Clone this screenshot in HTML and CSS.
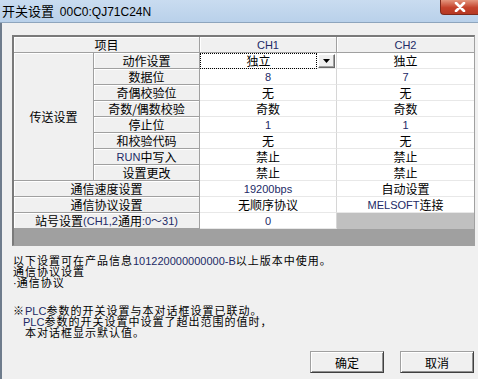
FILE: index.html
```html
<!DOCTYPE html>
<html lang="zh-CN">
<head>
    <meta charset="UTF-8">
    <title>开关设置</title>
    <link rel="stylesheet" href="styles.css">
</head>
<body>
    <div class="window">
        <div class="titlebar">
            <span class="title">开关设置&nbsp; <span class="lat">00C0:QJ71C24N</span></span>
            <div class="close-btn">
                <svg width="14" height="10" viewBox="0 0 14 10">
                    <path d="M3 1 L11 9 M11 1 L3 9" stroke="#fff" stroke-width="2.6" stroke-linecap="round"/>
                </svg>
            </div>
        </div>

        <div class="client">
            <div class="frame">
                <div class="grid">
                    <div class="head span2">项目</div>
                    <div class="head"><span class="lat">CH1</span></div>
                    <div class="head last"><span class="lat">CH2</span></div>

                    <div class="label group">传送设置</div>

                    <div class="label">动作设置</div>
                    <div class="val ch1 combo">
                        <div class="combo-text">独立</div>
                        <div class="combo-btn">
                            <svg width="7" height="4" viewBox="0 0 7 4"><path d="M0 0 H7 L3.5 4 Z" fill="#000"/></svg>
                        </div>
                    </div>
                    <div class="val">独立</div>

                    <div class="label">数据位</div>
                    <div class="val ch1"><span class="lat">8</span></div>
                    <div class="val"><span class="lat">7</span></div>

                    <div class="label">奇偶校验位</div>
                    <div class="val ch1">无</div>
                    <div class="val">无</div>

                    <div class="label">奇数/偶数校验</div>
                    <div class="val ch1">奇数</div>
                    <div class="val">奇数</div>

                    <div class="label">停止位</div>
                    <div class="val ch1"><span class="lat">1</span></div>
                    <div class="val"><span class="lat">1</span></div>

                    <div class="label">和校验代码</div>
                    <div class="val ch1">无</div>
                    <div class="val">无</div>

                    <div class="label"><span class="lat">RUN</span>中写入</div>
                    <div class="val ch1">禁止</div>
                    <div class="val">禁止</div>

                    <div class="label">设置更改</div>
                    <div class="val ch1">禁止</div>
                    <div class="val">禁止</div>

                    <div class="label span2">通信速度设置</div>
                    <div class="val ch1"><span class="lat">19200bps</span></div>
                    <div class="val">自动设置</div>

                    <div class="label span2">通信协议设置</div>
                    <div class="val ch1">无顺序协议</div>
                    <div class="val"><span class="lat">MELSOFT</span>连接</div>

                    <div class="label span2">站号设置<span class="lat">(CH1,2</span>通用<span class="lat">:0～31)</span></div>
                    <div class="val ch1"><span class="lat">0</span></div>
                    <div class="val disabled"></div>

                    <div class="band"></div>
                </div>
            </div>

            <div class="notes">
                <p>以下设置可在产品信息<span class="lat">101220000000000-B</span>以上版本中使用。</p>
                <p>通信协议设置</p>
                <p><span class="dot">·</span>通信协议</p>
            </div>
            <div class="notes warn">
                <p>※<span class="lat">PLC</span>参数的开关设置与本对话框设置已联动。</p>
                <p class="indent"><span class="lat">PLC</span>参数的开关设置中设置了超出范围的值时，</p>
                <p class="indent2">本对话框显示默认值。</p>
            </div>

            <div class="buttons">
                <button class="btn">确定</button>
                <button class="btn">取消</button>
            </div>
        </div>
    </div>
</body>
</html>
```

FILE: styles.css
```css
* {
    box-sizing: border-box;
}

body {
    margin: 0;
    padding: 0;
    width: 478px;
    height: 379px;
    overflow: hidden;
    background-color: #f0f0f0;
    font-family: "Noto Sans CJK SC", "Liberation Sans", sans-serif;
    font-size: 12px;
    color: #000;
}

.lat {
    font-family: "Liberation Sans", sans-serif;
    font-size: 11px;
    color: #222a66;
}

.window {
    height: 379px;
    border-left: 2px solid #6e7c8c;
}

.titlebar {
    height: 23px;
    display: flex;
    align-items: flex-start;
    justify-content: space-between;
    background: linear-gradient(#c9dcf0, #b9d1ea);
    border-bottom: 1px solid #8ea5bd;
    margin-left: -2px;
}

.title {
    padding: 3px 0 0 2px;
    line-height: 15px;
    font-size: 13px;
}

.title .lat {
    font-size: 12px;
    color: #000;
}

.close-btn {
    width: 38px;
    height: 15px;
    display: flex;
    align-items: center;
    justify-content: center;
    background: linear-gradient(#e4967e, #c4422b 55%, #b63a25);
    border: 1px solid #7e2a1c;
    border-top: none;
    border-right: none;
    border-radius: 0 0 0 4px;
}

.client {
    padding: 12px 3px 0 10px;
}

.frame {
    width: 463px;
    border-top: 2px solid #7a7a7a;
    border-left: 2px solid #7a7a7a;
    border-right: 1px solid #a0a0a0;
    border-bottom: 1px solid #a0a0a0;
    background-color: #fff;
}

.grid {
    display: grid;
    grid-template-columns: 80px 106px 137px 137px;
    grid-auto-rows: 16px;
}

.grid > div {
    display: flex;
    align-items: center;
    justify-content: center;
    line-height: 14px;
    white-space: nowrap;
}

.span2 {
    grid-column: span 2;
}

.head,
.label {
    background-color: #f0f0f0;
    border-right: 1px solid #a0a0a0;
    border-bottom: 1px solid #a0a0a0;
    box-shadow: inset 1px 1px 0 #fff;
}

.head.last {
    border-right: none;
}

.group {
    grid-row: span 8;
}

.val {
    background-color: #fff;
    border-bottom: 1px solid #e8e8e8;
}

.val.ch1 {
    border-right: 1px solid #d6d6d6;
}

.val.disabled {
    background-color: #c0c0c0;
    border-bottom: 1px solid #c0c0c0;
}

.grid > .combo {
    justify-content: space-between;
    padding: 0 1px 0 0;
}

.combo-text {
    flex: 1;
    height: 16px;
    display: flex;
    align-items: center;
    justify-content: center;
    border: 1px dotted #000;
}

.combo-btn {
    width: 17px;
    height: 14px;
    margin-left: 1px;
    display: flex;
    align-items: center;
    justify-content: center;
    background-color: #f0f0f0;
    border: 1px solid;
    border-color: #fff #696969 #696969 #fff;
    box-shadow: inset -1px -1px 0 #a0a0a0;
}

.band {
    grid-column: span 4;
    background-color: #a0a0a0;
}

.notes {
    margin-top: 9px;
    padding-left: 1px;
}

.notes p {
    margin: 0;
    font-size: 11px;
    letter-spacing: 1px;
    line-height: 11px;
    height: 11px;
    white-space: nowrap;
}

.notes .lat {
    letter-spacing: 0;
}

.notes .dot {
    font-family: "Liberation Sans", sans-serif;
    letter-spacing: 0;
}

.notes.warn {
    margin-top: 17px;
}

.notes .indent {
    padding-left: 10px;
}

.notes .indent2 {
    padding-left: 12px;
}

.buttons {
    margin-top: 13px;
    display: flex;
    justify-content: flex-end;
    gap: 16px;
    padding-right: 1px;
}

.btn {
    width: 74px;
    height: 22px;
    padding: 0;
    font-family: "Noto Sans CJK SC", sans-serif;
    font-size: 12px;
    color: #000;
    background-color: #f0f0f0;
    border: 1px solid;
    border-color: #a0a0a0 #404040 #404040 #a0a0a0;
    box-shadow: inset 1px 1px 0 #fff, inset -1px -1px 0 #909090;
}
```
